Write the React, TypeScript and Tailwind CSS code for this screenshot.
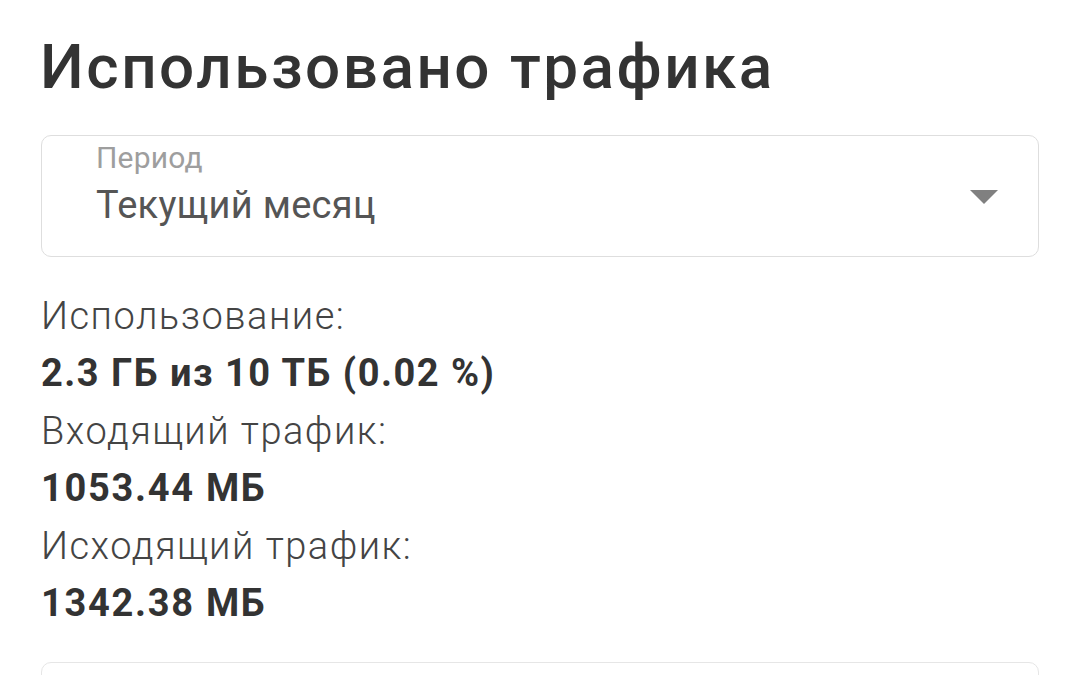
import React from "react";

export default function App() {
  const font = { fontFamily: "Roboto, 'Noto Sans', sans-serif" };
  return (
    <div className="w-[1080px] h-[675px] overflow-hidden bg-white" style={font}>
      <div className="px-[41px] pt-[31px]">
        <h1 className="text-[62px] leading-[72px] font-medium text-[#333333] -ml-[1px] tracking-[2.5px]">
          Использовано трафика
        </h1>
        <div className="mt-[32px] h-[122px] border border-[#dedede] rounded-[10px] flex items-start justify-between pl-[54px] pr-[40px] pt-[4px]">
          <div className="flex flex-col">
            <span className="text-[30px] leading-[36px] text-[#9e9e9e] tracking-[0.2px]">Период</span>
            <span className="mt-[7px] text-[38px] leading-[44px] text-[#555555] tracking-[0.3px]">Текущий месяц</span>
          </div>
          <svg width="28" height="14" viewBox="0 0 28 14" className="mt-[50px]">
            <polygon points="0,0 28,0 14,14" fill="#808080" />
          </svg>
        </div>
        <div className="mt-[31px] flex flex-col text-[38px] leading-[57.4px]">
          <span className="font-light text-[#444444] tracking-[1.5px]">Использование:</span>
          <span className="font-bold text-[#333333] tracking-[1.5px]">2.3 ГБ из 10 ТБ (0.02 %)</span>
          <span className="font-light text-[#444444] tracking-[1.5px]">Входящий трафик:</span>
          <span className="font-bold text-[#333333] tracking-[1.7px]">1053.44 МБ</span>
          <span className="font-light text-[#444444] tracking-[1.5px]">Исходящий трафик:</span>
          <span className="font-bold text-[#333333] tracking-[1.7px]">1342.38 МБ</span>
        </div>
        <div className="mt-[30px] h-[120px] border border-[#e6e6e6] rounded-[10px]" />
      </div>
    </div>
  );
}
